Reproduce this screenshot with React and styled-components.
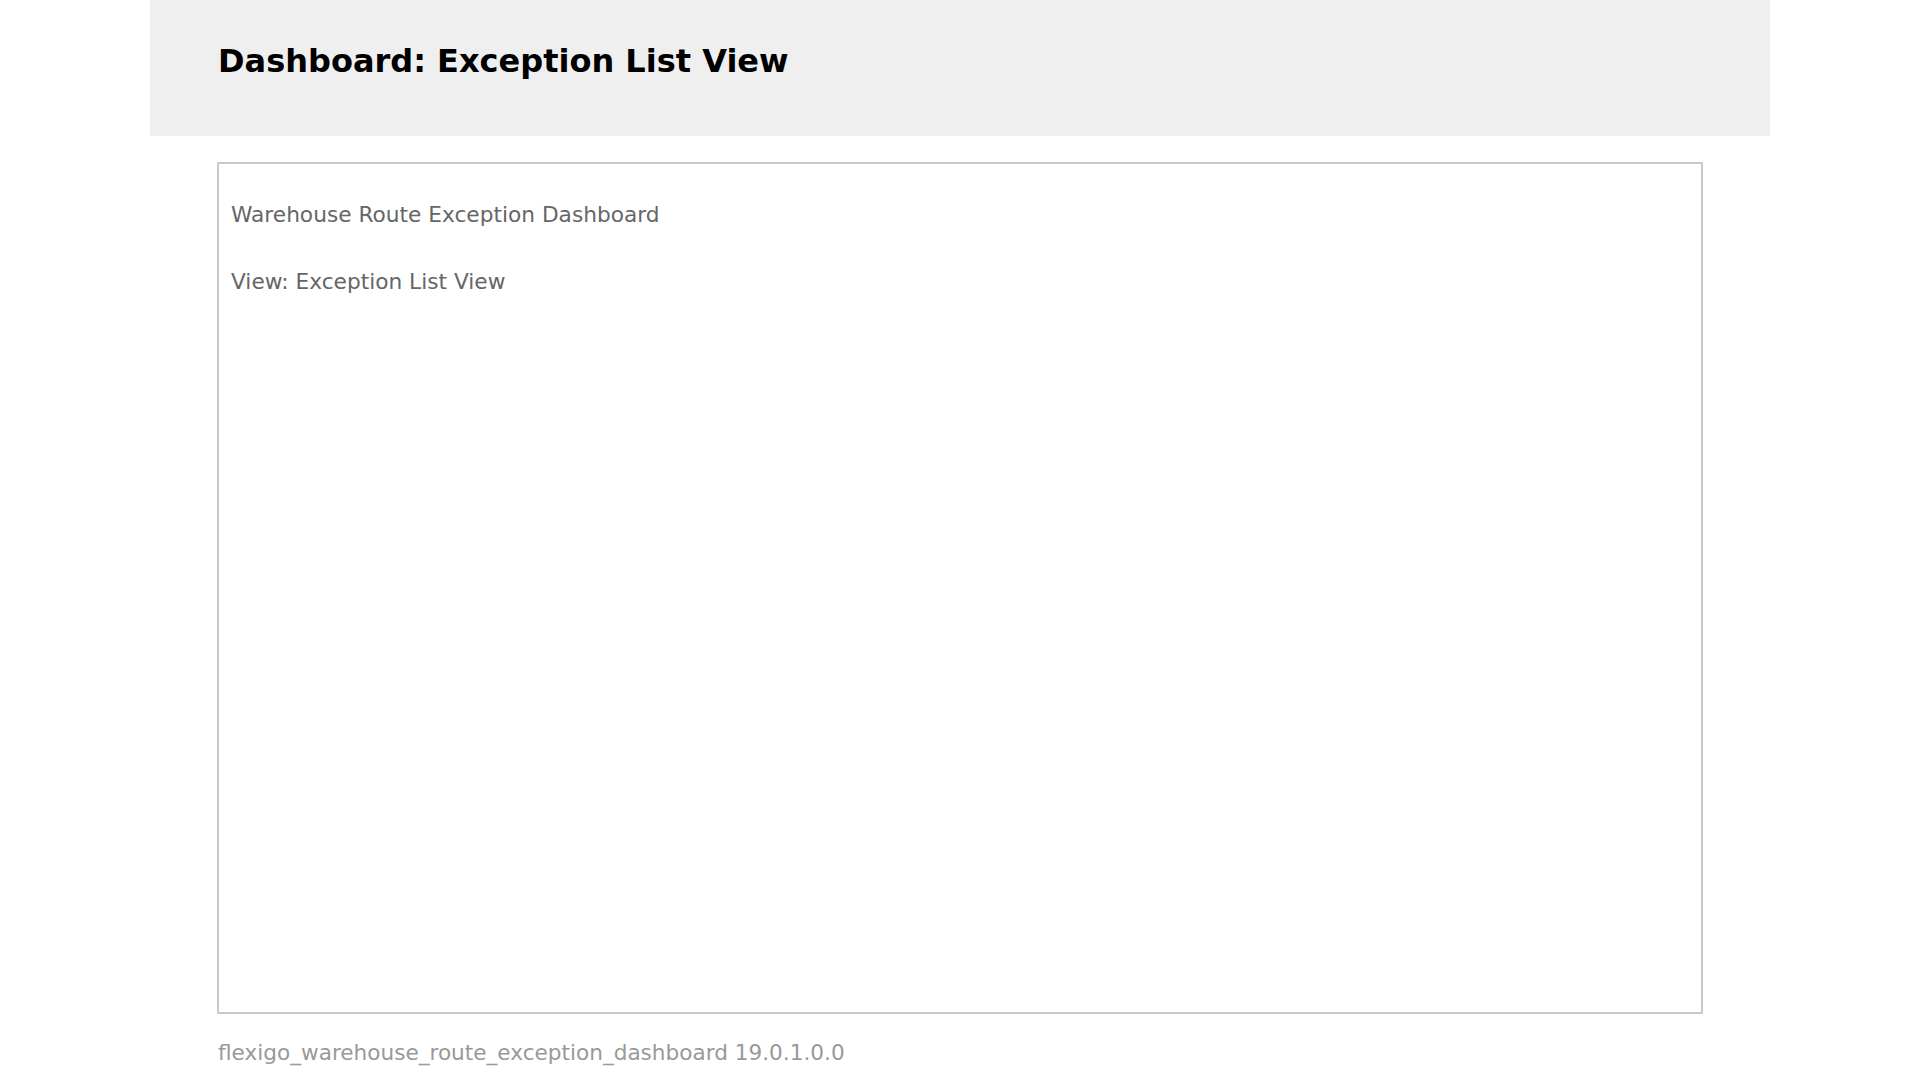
import React from "react";
import styled, { createGlobalStyle } from "styled-components";

const GlobalStyle = createGlobalStyle`
  html, body {
    margin: 0;
    padding: 0;
    background: #ffffff;
  }
  body {
    font-family: "DejaVu Sans", "Liberation Sans", sans-serif;
  }
  * {
    box-sizing: border-box;
  }
`;

const Page = styled.div`
  width: 1620px;
  margin: 0 auto;
`;

const Header = styled.header`
  height: 136px;
  background: #efefef;
  padding: 42px 68px 0;
`;

const Title = styled.h1`
  margin: 0;
  font-size: 32px;
  line-height: 1.2;
  font-weight: bold;
  color: #000;
`;

const Main = styled.main`
  padding: 26px 67px 0 67px;
`;

const Panel = styled.section`
  height: 852px;
  border: 2px solid #c8c8c8;
  padding: 35px 12px 0;
  display: flex;
  flex-direction: column;
  gap: 35px;
`;

const Line = styled.p`
  margin: 0;
  font-size: 21.7px;
  line-height: 32px;
  color: #666666;
`;

const Footer = styled.footer`
  margin-top: 23px;
  padding-left: 1px;
  font-size: 21.6px;
  line-height: 32px;
  color: #999999;
`;

export default function App() {
  return (
    <>
      <GlobalStyle />
      <Page>
        <Header>
          <Title>Dashboard: Exception List View</Title>
        </Header>
        <Main>
          <Panel>
            <Line>Warehouse Route Exception Dashboard</Line>
            <Line>View: Exception List View</Line>
          </Panel>
          <Footer>flexigo_warehouse_route_exception_dashboard 19.0.1.0.0</Footer>
        </Main>
      </Page>
    </>
  );
}
